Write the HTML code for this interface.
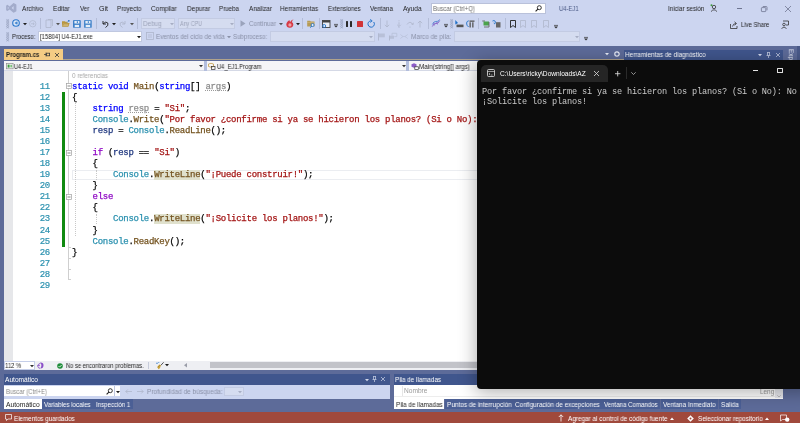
<!DOCTYPE html>
<html><head><meta charset="utf-8">
<style>
*{margin:0;padding:0;box-sizing:border-box}
html,body{width:800px;height:423px;overflow:hidden;background:#CCD5F0;font-family:"Liberation Sans",sans-serif;position:relative}
.a{position:absolute}
.t{position:absolute;white-space:pre;line-height:1;transform-origin:0 0;will-change:transform}
svg.i{position:absolute;overflow:visible}

.code{position:absolute;left:72.4px;font-family:"Liberation Mono",monospace;font-size:9px;letter-spacing:-0.27px;line-height:11.07px;white-space:pre;color:#000;will-change:transform;-webkit-text-stroke:0.25px currentColor}
.ln{position:absolute;left:20px;width:30px;text-align:right;font-family:"Liberation Mono",monospace;font-size:9px;letter-spacing:-0.27px;line-height:11.07px;color:#2B91AF;will-change:transform;-webkit-text-stroke:0.2px currentColor}
.kw{color:#0000FF}.ctl{color:#8F08C4}.ty{color:#2B91AF}.m{color:#74531F}.s{color:#A31515}.v{color:#1F377F}.un{color:#8C8C8C;text-decoration:underline dotted #9A9A9A}
.hl{background:#E0E1CD}

.term{position:absolute;left:481.5px;font-family:"Liberation Mono",monospace;font-size:8.58px;letter-spacing:-0.15px;line-height:10px;white-space:pre;color:#CCCCCC;will-change:transform}

</style></head><body>
<div class="a" style="left:0px;top:0px;width:800px;height:45px;background:#CCD5F0;"></div>
<svg class="i" style="left:6px;top:3.4px" width="10.5" height="9.8" viewBox="0 0 10.5 9.8"><path d="M7.2 0.2 Q7.6 0 8.1 0.2 L10 1.2 Q10.4 1.5 10.4 2 V7.8 Q10.4 8.3 10 8.6 L8.1 9.6 Q7.6 9.8 7.2 9.6 L3.6 6.4 L1.8 7.8 Q1.3 8.1 0.9 7.8 L0.4 7.4 Q0.1 7.2 0.1 6.8 V3 Q0.1 2.6 0.4 2.4 L0.9 2 Q1.3 1.7 1.8 2 L3.6 3.4 Z M7.6 3.1 L5.6 4.9 L7.6 6.7 Z M1.8 3.7 V6.1 L3 4.9 Z" fill="#A3ACCB" fill-rule="evenodd"/></svg>
<div class="t" style="left:22.17px;top:6.18px;font-size:6.6px;color:#1E1E1E;font-weight:normal;transform:scaleX(0.9618);font-family:"Liberation Sans",sans-serif;">Archivo</div>
<div class="t" style="left:53.17px;top:6.18px;font-size:6.6px;color:#1E1E1E;font-weight:normal;transform:scaleX(0.9725);font-family:"Liberation Sans",sans-serif;">Editar</div>
<div class="t" style="left:79.67px;top:6.18px;font-size:6.6px;color:#1E1E1E;font-weight:normal;transform:scaleX(0.9348);font-family:"Liberation Sans",sans-serif;">Ver</div>
<div class="t" style="left:98.57px;top:6.18px;font-size:6.6px;color:#1E1E1E;font-weight:normal;transform:scaleX(1.0738);font-family:"Liberation Sans",sans-serif;">Git</div>
<div class="t" style="left:117.17px;top:6.18px;font-size:6.6px;color:#1E1E1E;font-weight:normal;transform:scaleX(0.9377);font-family:"Liberation Sans",sans-serif;">Proyecto</div>
<div class="t" style="left:151.42px;top:6.18px;font-size:6.6px;color:#1E1E1E;font-weight:normal;transform:scaleX(0.9723);font-family:"Liberation Sans",sans-serif;">Compilar</div>
<div class="t" style="left:186.67px;top:6.18px;font-size:6.6px;color:#1E1E1E;font-weight:normal;transform:scaleX(0.9720);font-family:"Liberation Sans",sans-serif;">Depurar</div>
<div class="t" style="left:219.17px;top:6.18px;font-size:6.6px;color:#1E1E1E;font-weight:normal;transform:scaleX(0.9363);font-family:"Liberation Sans",sans-serif;">Prueba</div>
<div class="t" style="left:248.67px;top:6.18px;font-size:6.6px;color:#1E1E1E;font-weight:normal;transform:scaleX(0.9615);font-family:"Liberation Sans",sans-serif;">Analizar</div>
<div class="t" style="left:280.42px;top:6.18px;font-size:6.6px;color:#1E1E1E;font-weight:normal;transform:scaleX(0.9642);font-family:"Liberation Sans",sans-serif;">Herramientas</div>
<div class="t" style="left:328.42px;top:6.18px;font-size:6.6px;color:#1E1E1E;font-weight:normal;transform:scaleX(0.9092);font-family:"Liberation Sans",sans-serif;">Extensiones</div>
<div class="t" style="left:370.42px;top:6.18px;font-size:6.6px;color:#1E1E1E;font-weight:normal;transform:scaleX(0.9466);font-family:"Liberation Sans",sans-serif;">Ventana</div>
<div class="t" style="left:402.92px;top:6.18px;font-size:6.6px;color:#1E1E1E;font-weight:normal;transform:scaleX(0.9775);font-family:"Liberation Sans",sans-serif;">Ayuda</div>
<div class="a" style="left:430.5px;top:2.5px;width:115px;height:11.5px;background:#FFFFFF;border:1px solid #B9C1DA"></div>
<div class="t" style="left:433.43px;top:5.98px;font-size:6.4px;color:#6D6D6D;font-weight:normal;transform:scaleX(0.9397);font-family:"Liberation Sans",sans-serif;">Buscar (Ctrl+Q)</div>
<svg class="i" style="left:535px;top:4.5px" width="7" height="7" viewBox="0 0 7 7"><circle cx="4.3" cy="2.7" r="2" fill="none" stroke="#1E1E1E" stroke-width="0.9"/><path d="M2.9 4.1 L0.6 6.4" stroke="#1E1E1E" stroke-width="1.1"/></svg>
<div class="t" style="left:558.92px;top:6.18px;font-size:6.6px;color:#4B5A86;font-weight:normal;transform:scaleX(0.8936);font-family:"Liberation Sans",sans-serif;">U4-EJ1</div>
<div class="t" style="left:668.47px;top:6.18px;font-size:6.6px;color:#1E1E1E;font-weight:normal;transform:scaleX(0.9422);font-family:"Liberation Sans",sans-serif;">Iniciar sesión</div>
<svg class="i" style="left:709.5px;top:4px" width="8" height="8" viewBox="0 0 8 8"><circle cx="4" cy="3" r="1.7" fill="none" stroke="#333" stroke-width="0.8"/><path d="M1 7.6 Q4 4 7 7.6" fill="none" stroke="#333" stroke-width="0.8"/><circle cx="1.5" cy="1.2" r="1" fill="#3C9A3C"/></svg>
<div class="a" style="left:736.7px;top:8px;width:5.6px;height:0.8px;background:#6E7591;"></div>
<svg class="i" style="left:760.5px;top:6px" width="6.5" height="6" viewBox="0 0 6.5 6"><rect x="0.4" y="1.6" width="4.4" height="4" rx="0.6" fill="none" stroke="#6E7591" stroke-width="0.8"/><path d="M1.8 0.5 H5.2 Q6 0.5 6 1.3 V4.3" fill="none" stroke="#6E7591" stroke-width="0.8"/></svg>
<svg class="i" style="left:785px;top:6px" width="6" height="6" viewBox="0 0 6 6"><path d="M0 0 L6 6 M6 0 L0 6" stroke="#6E7591" stroke-width="0.8"/></svg>
<svg class="i" style="left:5.5px;top:18.5px" width="3.4" height="10" viewBox="0 0 3.4 10"><path d="M0.3 0.3 L3.1 2.1 L0.3 3.9 L3.1 5.7 L0.3 7.5 L3.1 9.3 M3.1 0.3 L0.3 2.1 L3.1 3.9 L0.3 5.7 L3.1 7.5 L0.3 9.3" fill="none" stroke="#939DBB" stroke-width="0.6"/></svg>
<svg class="i" style="left:11.8px;top:19.3px" width="8" height="8" viewBox="0 0 8 8"><circle cx="4" cy="4" r="3.3" fill="#D9E5F6" stroke="#2C78CC" stroke-width="1.1"/><path d="M4.8 2.4 L2.6 4 L4.8 5.6 Z" fill="#2C78CC"/><path d="M5.3 2.6 V5.4" stroke="#2C78CC" stroke-width="0.6"/></svg>
<svg class="i" style="left:22.5px;top:22.8px" width="4" height="3" viewBox="0 0 4 3"><path d="M0 0 H4 L2 2.2 Z" fill="#1E1E1E"/></svg>
<svg class="i" style="left:28.8px;top:19.6px" width="7.5" height="7.5" viewBox="0 0 7.5 7.5"><circle cx="3.75" cy="3.75" r="3.2" fill="none" stroke="#AEB6CC" stroke-width="0.7"/><path d="M2 3.75 H5.2 M3.9 2.5 L5.2 3.75 L3.9 5" fill="none" stroke="#AEB6CC" stroke-width="0.7"/></svg>
<div class="a" style="left:40px;top:18px;width:1px;height:11px;background:#B4BDD8;"></div>
<svg class="i" style="left:45px;top:19px" width="8" height="9" viewBox="0 0 8 9"><path d="M1 1 H6 V8.5 H1 Z M3 0.5 H7.5 V7" fill="none" stroke="#AEB6CC" stroke-width="0.8"/></svg>
<svg class="i" style="left:55.5px;top:22.8px" width="4" height="3" viewBox="0 0 4 3"><path d="M0 0 H4 L2 2.2 Z" fill="#555"/></svg>
<svg class="i" style="left:62px;top:20px" width="8" height="7" viewBox="0 0 8 7"><path d="M0 1.2 H2.8 L3.4 1.8 H5.6 V3 H1.4 L0 6.8 Z" fill="#B8963E"/><path d="M1.4 3 H7.6 L6.4 6.8 H0 Z" fill="#B8963E"/><path d="M1.5 4.3 H6.3 M1.2 5.5 H6" stroke="#E2D2A8" stroke-width="0.5"/><circle cx="6.8" cy="0.8" r="0.9" fill="#1E70C8"/><path d="M4.6 2.6 L6.2 1.4" stroke="#5B95D5" stroke-width="0.6"/></svg>
<svg class="i" style="left:73.2px;top:20px" width="8" height="8" viewBox="0 0 8 8"><rect x="0" y="0" width="7.8" height="7.8" rx="0.9" fill="#3D7FC8"/><rect x="1.4" y="0.9" width="5" height="2.6" fill="#E6EEF8"/><rect x="3.8" y="1.2" width="1.1" height="1.8" fill="#3D7FC8"/><rect x="1.7" y="4.9" width="4.4" height="2.2" fill="#E6EEF8"/></svg>
<svg class="i" style="left:84.2px;top:20px" width="8" height="8" viewBox="0 0 8 8"><rect x="0" y="0" width="7.8" height="7.8" rx="0.9" fill="#4A88CC"/><rect x="1.4" y="0.9" width="5" height="2.6" fill="#E6EEF8"/><rect x="3.8" y="1.2" width="1.1" height="1.8" fill="#4A88CC"/><rect x="1.7" y="4.9" width="4.4" height="2.2" fill="#E6EEF8"/></svg>
<div class="a" style="left:96px;top:18px;width:1px;height:11px;background:#B4BDD8;"></div>
<svg class="i" style="left:101px;top:19.5px" width="8" height="8" viewBox="0 0 8 8"><path d="M2 1 V4 H5" fill="none" stroke="#1E1E1E" stroke-width="0.9"/><path d="M2.2 3.8 Q5 0.8 6.8 3 Q8 5.5 4.5 7.5" fill="none" stroke="#1E1E1E" stroke-width="0.9"/></svg>
<svg class="i" style="left:112px;top:22.8px" width="4" height="3" viewBox="0 0 4 3"><path d="M0 0 H4 L2 2.2 Z" fill="#1E1E1E"/></svg>
<svg class="i" style="left:118.5px;top:19.5px" width="8" height="8" viewBox="0 0 8 8"><path d="M6 1 V4 H3" fill="none" stroke="#AEB6CC" stroke-width="0.9"/><path d="M5.8 3.8 Q3 0.8 1.2 3 Q0 5.5 3.5 7.5" fill="none" stroke="#AEB6CC" stroke-width="0.9"/></svg>
<svg class="i" style="left:130px;top:22.8px" width="4" height="3" viewBox="0 0 4 3"><path d="M0 0 H4 L2 2.2 Z" fill="#555"/></svg>
<div class="a" style="left:137px;top:18px;width:1px;height:11px;background:#B4BDD8;"></div>
<div class="a" style="left:140.5px;top:18px;width:34px;height:10.8px;background:#D5DCF0;border:1px solid #C3CBE3"></div>
<div class="t" style="left:142.67px;top:21.08px;font-size:6.6px;color:#9DA4BA;font-weight:normal;transform:scaleX(0.9600);font-family:"Liberation Sans",sans-serif;">Debug</div>
<svg class="i" style="left:169.5px;top:22.8px" width="4" height="3" viewBox="0 0 4 3"><path d="M0 0 H4 L2 2.2 Z" fill="#A7AEC4"/></svg>
<div class="a" style="left:178px;top:18px;width:57px;height:10.8px;background:#D5DCF0;border:1px solid #C3CBE3"></div>
<div class="t" style="left:180.17px;top:21.08px;font-size:6.6px;color:#9DA4BA;font-weight:normal;transform:scaleX(0.8170);font-family:"Liberation Sans",sans-serif;">Any CPU</div>
<svg class="i" style="left:229.5px;top:22.8px" width="4" height="3" viewBox="0 0 4 3"><path d="M0 0 H4 L2 2.2 Z" fill="#A7AEC4"/></svg>
<svg class="i" style="left:240px;top:20px" width="6" height="7" viewBox="0 0 6 7"><path d="M0.5 0.3 L5.5 3.5 L0.5 6.7 Z" fill="#9AA3BC"/></svg>
<div class="t" style="left:249.17px;top:21.08px;font-size:6.6px;color:#8A91A8;font-weight:normal;transform:scaleX(0.9411);font-family:"Liberation Sans",sans-serif;">Continuar</div>
<svg class="i" style="left:278.5px;top:22.8px" width="4" height="3" viewBox="0 0 4 3"><path d="M0 0 H4 L2 2.2 Z" fill="#555"/></svg>
<svg class="i" style="left:286px;top:19px" width="8" height="9" viewBox="0 0 8 9"><path d="M7.6 0.2 Q4.5 1.2 4.2 3 Q3.2 1.8 3.6 0.9 Q0.2 3 0.3 5.6 Q0.6 8.8 3.8 8.8 Q7.4 8.6 7.3 5.2 Q7.2 3.6 6 3.2 Q5.8 1.6 7.6 0.2 Z" fill="#D63A45"/><ellipse cx="3.9" cy="5.9" rx="1.6" ry="1.7" fill="#F0A0A6"/></svg>
<svg class="i" style="left:296px;top:22.8px" width="4" height="3" viewBox="0 0 4 3"><path d="M0 0 H4 L2 2.2 Z" fill="#1E1E1E"/></svg>
<div class="a" style="left:302px;top:18px;width:1px;height:11px;background:#B4BDD8;"></div>
<svg class="i" style="left:306.5px;top:20px" width="8.5" height="8" viewBox="0 0 8.5 8"><path d="M0.2 0.8 H3 L3.8 1.6 H7.5 V6.5 H0.2 Z" fill="#B59A55"/><path d="M0.2 2.4 H7.5" stroke="#D9C593" stroke-width="0.5"/><circle cx="5.6" cy="5" r="1.5" fill="#E6EEF8" stroke="#1E70C8" stroke-width="0.8"/><path d="M4.6 6 L3.4 7.6" stroke="#1E70C8" stroke-width="1"/></svg>
<div class="a" style="left:318.5px;top:18px;width:1px;height:11px;background:#B4BDD8;"></div>
<svg class="i" style="left:321.6px;top:19.8px" width="8.5" height="8" viewBox="0 0 8.5 8"><rect x="0.5" y="0.5" width="7.5" height="7" fill="#E9EDF7" stroke="#424242" stroke-width="0.9"/><rect x="0.5" y="0.5" width="7.5" height="2" fill="#424242"/><circle cx="2.2" cy="6" r="1.5" fill="none" stroke="#1E70C8" stroke-width="0.9"/></svg>
<svg class="i" style="left:333.8px;top:23.5px" width="4" height="4" viewBox="0 0 4 4"><path d="M0 0.4 H4" stroke="#333" stroke-width="0.7"/><path d="M0 1.5 H4 L2 3.6 Z" fill="#333"/></svg>
<svg class="i" style="left:340.0px;top:18.5px" width="3.4" height="10" viewBox="0 0 3.4 10"><path d="M0.3 0.3 L3.1 2.1 L0.3 3.9 L3.1 5.7 L0.3 7.5 L3.1 9.3 M3.1 0.3 L0.3 2.1 L3.1 3.9 L0.3 5.7 L3.1 7.5 L0.3 9.3" fill="none" stroke="#939DBB" stroke-width="0.6"/></svg>
<div class="a" style="left:345.9px;top:20.7px;width:2.4px;height:6px;background:#2A2A2A;border-radius:0.5px"></div>
<div class="a" style="left:349.5px;top:20.7px;width:2.4px;height:6px;background:#2A2A2A;border-radius:0.5px"></div>
<div class="a" style="left:356.8px;top:21.2px;width:6.2px;height:5.5px;background:#D13438;border-radius:0.6px"></div>
<svg class="i" style="left:367px;top:19.5px" width="8" height="8" viewBox="0 0 8 8"><path d="M6.7 2 A3.2 3.2 0 1 1 3.8 0.8" fill="none" stroke="#1E70C8" stroke-width="1"/><path d="M3.2 -0.6 L5.2 0.9 L3.2 2.4" fill="none" stroke="#1E70C8" stroke-width="0.9"/></svg>
<div class="a" style="left:379.5px;top:18px;width:1px;height:11px;background:#B4BDD8;"></div>
<svg class="i" style="left:384px;top:19.5px" width="6" height="8" viewBox="0 0 6 8"><path d="M3 0.5 V7 M0.8 4.8 L3 7 L5.2 4.8" fill="none" stroke="#AEB6CC" stroke-width="0.8"/></svg>
<svg class="i" style="left:395.5px;top:19.5px" width="6" height="8" viewBox="0 0 6 8"><path d="M3 0.3 V1.3 M3 2.3 V6.5 M1.2 4.8 L3 6.6 L4.8 4.8" fill="none" stroke="#AEB6CC" stroke-width="0.8"/><circle cx="3" cy="7.4" r="0.5" fill="#AEB6CC"/></svg>
<svg class="i" style="left:405.5px;top:19.5px" width="8" height="8" viewBox="0 0 8 8"><path d="M1 4.5 Q4 0 7 4.5 M5.2 3.8 L7 4.6 L7.4 2.7" fill="none" stroke="#AEB6CC" stroke-width="0.8"/><circle cx="4" cy="7" r="0.6" fill="#AEB6CC"/></svg>
<svg class="i" style="left:417px;top:19.5px" width="6" height="8" viewBox="0 0 6 8"><path d="M3 7.5 V1 M0.8 3.2 L3 1 L5.2 3.2" fill="none" stroke="#AEB6CC" stroke-width="0.8"/></svg>
<div class="a" style="left:428px;top:18px;width:1px;height:11px;background:#B4BDD8;"></div>
<svg class="i" style="left:431.5px;top:20px" width="8" height="7" viewBox="0 0 8 7"><path d="M0.3 6.5 Q2 3 4 3.5 Q6 4 7.7 0.5" fill="none" stroke="#7E57C2" stroke-width="0.9"/><path d="M0.3 4.5 Q2 1 4 1.5 Q6 2 7.7 -0.5" fill="none" stroke="#3C7FD0" stroke-width="0.8"/><path d="M1.5 2.5 L2.5 5.5 M4.5 1.8 L5.5 4.5" stroke="#7E57C2" stroke-width="0.6"/></svg>
<svg class="i" style="left:444px;top:23.5px" width="4" height="4" viewBox="0 0 4 4"><path d="M0 0.4 H4" stroke="#333" stroke-width="0.7"/><path d="M0 1.5 H4 L2 3.6 Z" fill="#333"/></svg>
<svg class="i" style="left:450.0px;top:18.5px" width="3.4" height="10" viewBox="0 0 3.4 10"><path d="M0.3 0.3 L3.1 2.1 L0.3 3.9 L3.1 5.7 L0.3 7.5 L3.1 9.3 M3.1 0.3 L0.3 2.1 L3.1 3.9 L0.3 5.7 L3.1 7.5 L0.3 9.3" fill="none" stroke="#939DBB" stroke-width="0.6"/></svg>
<svg class="i" style="left:455px;top:19.8px" width="9" height="8" viewBox="0 0 9 8"><path d="M0.3 0 L0.3 4.5 L3 3 Z" fill="#1E70C8"/><rect x="1.5" y="4.6" width="7" height="2.6" fill="#555"/></svg>
<svg class="i" style="left:466px;top:20px" width="9" height="8" viewBox="0 0 9 8"><path d="M2.6 7 Q0.4 5.5 0.6 3 Q0.8 1 2.8 0.8" fill="none" stroke="#1E70C8" stroke-width="0.9"/><rect x="3.5" y="0.5" width="5" height="1.3" fill="#555"/><rect x="3.5" y="2.3" width="1.3" height="5.2" fill="#555"/><rect x="6.2" y="2.3" width="1.3" height="5.2" fill="#555"/></svg>
<div class="a" style="left:478px;top:18px;width:1px;height:11px;background:#B4BDD8;"></div>
<svg class="i" style="left:482px;top:20px" width="8" height="8" viewBox="0 0 8 8"><path d="M0.3 1 H3" stroke="#555" stroke-width="0.8"/><rect x="1.5" y="1.5" width="5.5" height="4" fill="#4CA34C"/><path d="M7 2 V7 H2" fill="none" stroke="#666" stroke-width="0.9"/></svg>
<svg class="i" style="left:492px;top:20px" width="9" height="8" viewBox="0 0 9 8"><path d="M0.5 1 Q2 0 3.2 1.2 Q3.8 2.4 2.6 3.6" fill="none" stroke="#1E70C8" stroke-width="0.9"/><path d="M1.8 2.8 L2.6 3.8 L3.6 3" fill="none" stroke="#1E70C8" stroke-width="0.7"/><rect x="4" y="2.2" width="4.5" height="5.3" fill="#666"/></svg>
<div class="a" style="left:504.5px;top:18px;width:1px;height:11px;background:#B4BDD8;"></div>
<svg class="i" style="left:509.5px;top:19.5px" width="6" height="8" viewBox="0 0 6 8"><path d="M0.5 0.5 H5.5 V7.5 L3 5.5 L0.5 7.5 Z" fill="none" stroke="#1E1E1E" stroke-width="0.9"/></svg>
<svg class="i" style="left:520px;top:19.5px" width="7" height="8" viewBox="0 0 7 8"><path d="M0.5 0.5 H5.5 V7.5 L3 5.5 L0.5 7.5 Z" fill="none" stroke="#AEB6CC" stroke-width="0.8"/></svg>
<svg class="i" style="left:531px;top:19.5px" width="7" height="8" viewBox="0 0 7 8"><path d="M0.5 0.5 H5.5 V7.5 L3 5.5 L0.5 7.5 Z" fill="none" stroke="#AEB6CC" stroke-width="0.8"/></svg>
<svg class="i" style="left:542.5px;top:19.5px" width="7" height="8" viewBox="0 0 7 8"><path d="M0.5 0.5 H5.5 V7.5 L3 5.5 L0.5 7.5 Z" fill="none" stroke="#AEB6CC" stroke-width="0.8"/></svg>
<svg class="i" style="left:553.5px;top:24.5px" width="4" height="4" viewBox="0 0 4 4"><path d="M0 0.4 H4" stroke="#333" stroke-width="0.7"/><path d="M0 1.5 H4 L2 3.6 Z" fill="#333"/></svg>
<svg class="i" style="left:730px;top:20.5px" width="8" height="8" viewBox="0 0 8 8"><path d="M0.5 3 V7.5 H7 V5" fill="none" stroke="#333" stroke-width="0.8"/><path d="M2.5 5.5 Q3 2.5 6 2.5 M4.5 0.8 L6.5 2.5 L4.5 4.2" fill="none" stroke="#333" stroke-width="0.8"/></svg>
<div class="t" style="left:740.67px;top:21.98px;font-size:6.6px;color:#1E1E1E;font-weight:normal;transform:scaleX(0.8963);font-family:"Liberation Sans",sans-serif;">Live Share</div>
<svg class="i" style="left:781px;top:20px" width="8" height="9" viewBox="0 0 8 9"><path d="M2 1 H7.5 V5 H5" fill="none" stroke="#333" stroke-width="0.8"/><circle cx="3" cy="4.5" r="1.3" fill="none" stroke="#333" stroke-width="0.8"/><path d="M0.5 8.5 Q3 5.5 5.5 8.5" fill="none" stroke="#333" stroke-width="0.8"/></svg>
<svg class="i" style="left:5.5px;top:31.5px" width="3.4" height="10" viewBox="0 0 3.4 10"><path d="M0.3 0.3 L3.1 2.1 L0.3 3.9 L3.1 5.7 L0.3 7.5 L3.1 9.3 M3.1 0.3 L0.3 2.1 L3.1 3.9 L0.3 5.7 L3.1 7.5 L0.3 9.3" fill="none" stroke="#939DBB" stroke-width="0.6"/></svg>
<div class="t" style="left:11.67px;top:34.18px;font-size:6.6px;color:#1E1E1E;font-weight:normal;transform:scaleX(0.8935);font-family:"Liberation Sans",sans-serif;">Proceso:</div>
<div class="a" style="left:38.4px;top:31px;width:103.2px;height:10.6px;background:#FFFFFF;border:1px solid #C0C8E0"></div>
<div class="t" style="left:39.67px;top:33.98px;font-size:6.6px;color:#1E1E1E;font-weight:normal;transform:scaleX(0.9033);font-family:"Liberation Sans",sans-serif;">[15804] U4-EJ1.exe</div>
<svg class="i" style="left:136.5px;top:36px" width="4" height="3" viewBox="0 0 4 3"><path d="M0 0 H4 L2 2.2 Z" fill="#1E1E1E"/></svg>
<svg class="i" style="left:146px;top:32px" width="8" height="8" viewBox="0 0 8 8"><rect x="0.5" y="0.5" width="7" height="7" fill="none" stroke="#AEB6CC" stroke-width="0.8"/><path d="M2 3 H6 M2 5 H6" stroke="#AEB6CC" stroke-width="0.7"/></svg>
<div class="t" style="left:155.92px;top:34.18px;font-size:6.6px;color:#8A91A8;font-weight:normal;transform:scaleX(0.9460);font-family:"Liberation Sans",sans-serif;">Eventos del ciclo de vida</div>
<svg class="i" style="left:226.5px;top:36px" width="4" height="3" viewBox="0 0 4 3"><path d="M0 0 H4 L2 2.2 Z" fill="#8A91A8"/></svg>
<div class="t" style="left:232.92px;top:34.18px;font-size:6.6px;color:#8A91A8;font-weight:normal;transform:scaleX(0.9225);font-family:"Liberation Sans",sans-serif;">Subproceso:</div>
<div class="a" style="left:270px;top:31px;width:104.5px;height:10.6px;background:#D5DCF0;border:1px solid #C3CBE3"></div>
<svg class="i" style="left:369px;top:36px" width="4" height="3" viewBox="0 0 4 3"><path d="M0 0 H4 L2 2.2 Z" fill="#A7AEC4"/></svg>
<svg class="i" style="left:378px;top:33px" width="7" height="7.5" viewBox="0 0 7 7.5"><path d="M0.5 7.5 V0.3" stroke="#AEB6CC" stroke-width="0.9"/><path d="M1 0.5 H6.8 V4.3 H1 Z" fill="#B8C0D8"/></svg>
<svg class="i" style="left:388.5px;top:33px" width="8" height="7.5" viewBox="0 0 8 7.5"><path d="M0.5 7.5 V2.5" stroke="#AEB6CC" stroke-width="0.9"/><path d="M1 2.7 H5 V5.8 H1 Z" fill="#B8C0D8"/><path d="M3 2.6 V0.3 H7.8 V3.6 H5.3" fill="none" stroke="#B8C0D8" stroke-width="0.8"/></svg>
<svg class="i" style="left:400.3px;top:34px" width="8" height="5" viewBox="0 0 8 5"><path d="M0.3 0.5 L3 2.5 L0.3 4.5 M7.7 0.5 L5 2.5 L7.7 4.5 M3 2.5 H5" fill="none" stroke="#B8C0D8" stroke-width="0.7"/></svg>
<div class="t" style="left:411.42px;top:34.18px;font-size:6.6px;color:#8A91A8;font-weight:normal;transform:scaleX(0.9695);font-family:"Liberation Sans",sans-serif;">Marco de pila:</div>
<div class="a" style="left:453.75px;top:31px;width:126px;height:10.6px;background:#D5DCF0;border:1px solid #C3CBE3"></div>
<svg class="i" style="left:574.5px;top:36px" width="4" height="3" viewBox="0 0 4 3"><path d="M0 0 H4 L2 2.2 Z" fill="#A7AEC4"/></svg>
<svg class="i" style="left:583.5px;top:37px" width="4" height="4" viewBox="0 0 4 4"><path d="M0 0.4 H4" stroke="#333" stroke-width="0.7"/><path d="M0 1.5 H4 L2 3.6 Z" fill="#333"/></svg>
<div class="a" style="left:0px;top:45.5px;width:800px;height:367px;background:#5D6B99;"></div>
<div class="a" style="left:4px;top:48.75px;width:58.5px;height:11px;background:#F5CC84;"></div>
<div class="t" style="left:5.67px;top:52.33px;font-size:6.6px;color:#1E1E1E;font-weight:bold;transform:scaleX(0.9205);font-family:"Liberation Sans",sans-serif;">Program.cs</div>
<svg class="i" style="left:44.3px;top:52.2px" width="6" height="5" viewBox="0 0 6 5"><path d="M0 2.5 H2 M2 0.6 V4.4" fill="none" stroke="#3A3A3A" stroke-width="0.8"/><rect x="2.6" y="1.2" width="3" height="2.6" fill="none" stroke="#3A3A3A" stroke-width="0.8"/></svg>
<svg class="i" style="left:55px;top:52.5px" width="4" height="4" viewBox="0 0 4 4"><path d="M0 0 L4 4 M4 0 L0 4" stroke="#333" stroke-width="0.8"/></svg>
<div class="a" style="left:62.5px;top:58.6px;width:561.5px;height:1.3px;background:#B0A38C;"></div>
<svg class="i" style="left:605px;top:53px" width="4" height="3" viewBox="0 0 4 3"><path d="M0 0 H4 L2 2.2 Z" fill="#E8ECF7"/></svg>
<svg class="i" style="left:613.5px;top:51px" width="6" height="6" viewBox="0 0 6 6"><circle cx="3" cy="3" r="2.2" fill="none" stroke="#E8ECF7" stroke-width="1.2"/></svg>
<div class="a" style="left:623.75px;top:49.5px;width:159px;height:10.8px;background:#40568D;"></div>
<div class="t" style="left:625.42px;top:52.38px;font-size:6.6px;color:#FFFFFF;font-weight:normal;transform:scaleX(0.9610);font-family:"Liberation Sans",sans-serif;">Herramientas de diagnóstico</div>
<svg class="i" style="left:757.5px;top:54px" width="4" height="3" viewBox="0 0 4 3"><path d="M0 0 H4 L2 2.2 Z" fill="#D0D6EA"/></svg>
<svg class="i" style="left:766px;top:51.5px" width="5" height="6" viewBox="0 0 5 6"><path d="M1 0.5 H4 M1.5 0.5 V3.5 M3.5 0.5 V3.5 M0.5 3.5 H4.5 M2.5 3.5 V6" fill="none" stroke="#D0D6EA" stroke-width="0.7"/></svg>
<svg class="i" style="left:775.5px;top:52.5px" width="4" height="4" viewBox="0 0 4 4"><path d="M0 0 L4 4 M4 0 L0 4" stroke="#D0D6EA" stroke-width="0.7"/></svg>
<div class="a" style="left:796.5px;top:46px;width:4px;height:15px;background:#4A5A8A;"></div>
<div class="t" style="left:787px;top:49px;font-size:6.4px;color:#E8ECF7;transform-origin:0 0;transform:translate(6.8px,0) rotate(90deg);width:12px;overflow:hidden">Explo</div>
<div class="a" style="left:4px;top:60.7px;width:474px;height:10.6px;background:#F5F5F7;border-bottom:1px solid #D5D9E6"></div>
<svg class="i" style="left:6px;top:62.5px" width="7.5" height="6.2" viewBox="0 0 7.5 6.2"><rect x="0.4" y="0.4" width="6.7" height="5.4" fill="#F4F4F4" stroke="#8C8C8C" stroke-width="0.7"/><rect x="1.6" y="1.6" width="2" height="3" fill="#3C9A3C"/><rect x="4.3" y="1.8" width="1.8" height="2.6" fill="#7CC27C"/></svg>
<div class="t" style="left:14.43px;top:63.88px;font-size:6.4px;color:#1E1E1E;font-weight:normal;transform:scaleX(0.8746);font-family:"Liberation Sans",sans-serif;">U4-EJ1</div>
<div class="a" style="left:203.8px;top:60.8px;width:3px;height:10px;background:#B3BEDD;"></div>
<svg class="i" style="left:199px;top:65px" width="4" height="3" viewBox="0 0 4 3"><path d="M0 0 H4 L2 2.2 Z" fill="#333"/></svg>
<svg class="i" style="left:208px;top:62.5px" width="8" height="7" viewBox="0 0 8 7"><path d="M0.5 1 L3 0.3 L5.5 1 V3.5 L3 4.2 L0.5 3.5 Z" fill="none" stroke="#C29A45" stroke-width="0.8"/><rect x="3.5" y="3.5" width="3.5" height="3" fill="none" stroke="#333" stroke-width="0.7"/></svg>
<div class="t" style="left:216.58px;top:63.88px;font-size:6.4px;color:#1E1E1E;font-weight:normal;transform:scaleX(0.9043);font-family:"Liberation Sans",sans-serif;">U4_EJ1.Program</div>
<svg class="i" style="left:401.5px;top:65px" width="4" height="3" viewBox="0 0 4 3"><path d="M0 0 H4 L2 2.2 Z" fill="#333"/></svg>
<div class="a" style="left:406.3px;top:60.8px;width:2.6px;height:10px;background:#B3BEDD;"></div>
<svg class="i" style="left:410.5px;top:62.5px" width="8" height="7" viewBox="0 0 8 7"><path d="M0.5 1.2 L3 0.2 L5.5 1.2 V3.8 L3 4.8 L0.5 3.8 Z" fill="#8C5BC7"/><rect x="3.8" y="3.8" width="3.5" height="2.8" fill="#fff" stroke="#333" stroke-width="0.7"/></svg>
<div class="t" style="left:419.48px;top:63.98px;font-size:6.4px;color:#1E1E1E;font-weight:normal;transform:scaleX(0.9872);font-family:"Liberation Sans",sans-serif;">Main(string[] args)</div>
<div class="a" style="left:4px;top:71.3px;width:474px;height:290px;background:#FFFFFF;"></div>
<div class="a" style="left:4px;top:71.3px;width:9px;height:290px;background:#E6E7EA;"></div>
<div class="a" style="left:72.4px;top:169.8px;width:406px;height:10.4px;background:transparent;border:1px solid #EBEDF1;border-right:none"></div>
<div class="t" style="left:72.38px;top:73.23px;font-size:6.5px;color:#A8A8A8;font-weight:normal;transform:scaleX(0.9567);font-family:"Liberation Sans",sans-serif;">0 referencias</div>
<div class="ln" style="top:81.60px">11</div>
<div class="ln" style="top:92.67px">12</div>
<div class="ln" style="top:103.74px">13</div>
<div class="ln" style="top:114.81px">14</div>
<div class="ln" style="top:125.88px">15</div>
<div class="ln" style="top:136.95px">16</div>
<div class="ln" style="top:148.02px">17</div>
<div class="ln" style="top:159.09px">18</div>
<div class="ln" style="top:170.16px">19</div>
<div class="ln" style="top:181.23px">20</div>
<div class="ln" style="top:192.30px">21</div>
<div class="ln" style="top:203.37px">22</div>
<div class="ln" style="top:214.44px">23</div>
<div class="ln" style="top:225.51px">24</div>
<div class="ln" style="top:236.58px">25</div>
<div class="ln" style="top:247.65px">26</div>
<div class="ln" style="top:258.72px">27</div>
<div class="ln" style="top:269.79px">28</div>
<div class="ln" style="top:280.86px">29</div>
<div class="a" style="left:62px;top:92px;width:3px;height:154.5px;background:#108A10;"></div>
<div class="a" style="left:68.3px;top:71.3px;width:0.8px;height:208.5px;background:#CFCFCF;"></div>
<div class="a" style="left:68.3px;top:246.5px;width:2.5px;height:0.7px;background:#CFCFCF;"></div>
<div class="a" style="left:68.3px;top:258px;width:2.5px;height:0.7px;background:#CFCFCF;"></div>
<div class="a" style="left:68.3px;top:269px;width:2.5px;height:0.7px;background:#CFCFCF;"></div>
<div class="a" style="left:68.3px;top:279.3px;width:2.5px;height:0.7px;background:#CFCFCF;"></div>
<svg class="i" style="left:65.8px;top:83px" width="6" height="6" viewBox="0 0 6 6"><rect x="0.4" y="0.4" width="5.2" height="5.2" fill="#fff" stroke="#A0A0A0" stroke-width="0.7"/><path d="M1.5 3 H4.5" stroke="#555" stroke-width="0.7"/></svg>
<svg class="i" style="left:65.8px;top:149.5px" width="6" height="6" viewBox="0 0 6 6"><rect x="0.4" y="0.4" width="5.2" height="5.2" fill="#fff" stroke="#A0A0A0" stroke-width="0.7"/><path d="M1.5 3 H4.5" stroke="#555" stroke-width="0.7"/></svg>
<svg class="i" style="left:65.8px;top:193.8px" width="6" height="6" viewBox="0 0 6 6"><rect x="0.4" y="0.4" width="5.2" height="5.2" fill="#fff" stroke="#A0A0A0" stroke-width="0.7"/><path d="M1.5 3 H4.5" stroke="#555" stroke-width="0.7"/></svg>
<div class="a" style="left:75px;top:103px;width:0;height:133px;border-left:0.8px dotted #C8C8C8"></div>
<div class="a" style="left:95.5px;top:170px;width:0;height:10px;border-left:0.8px dotted #C8C8C8"></div>
<div class="a" style="left:95.5px;top:214px;width:0;height:10px;border-left:0.8px dotted #C8C8C8"></div>
<div class="code" style="top:81.60px"><span class="kw">static</span> <span class="kw">void</span> <span class="m">Main</span>(<span class="kw">string</span>[] <span class="un">args</span>)</div>
<div class="code" style="top:92.67px">{</div>
<div class="code" style="top:103.74px">    <span class="kw">string</span> <span class="un">resp</span> = <span class="s">"Si"</span>;</div>
<div class="code" style="top:114.81px">    <span class="ty">Console</span>.<span class="m">Write</span>(<span class="s">"Por favor ¿confirme si ya se hicieron los planos? (Si o No): "</span>);</div>
<div class="code" style="top:125.88px">    <span class="v">resp</span> = <span class="ty">Console</span>.<span class="m">ReadLine</span>();</div>
<div class="code" style="top:136.95px"></div>
<div class="code" style="top:148.02px">    <span class="ctl">if</span> (<span class="v">resp</span> == <span class="s">"Si"</span>)</div>
<div class="code" style="top:159.09px">    {</div>
<div class="code" style="top:170.16px">        <span class="ty">Console</span>.<span class="m hl">WriteLine</span>(<span class="s">"¡Puede construir!"</span>);</div>
<div class="code" style="top:181.23px">    }</div>
<div class="code" style="top:192.30px">    <span class="ctl">else</span></div>
<div class="code" style="top:203.37px">    {</div>
<div class="code" style="top:214.44px">        <span class="ty">Console</span>.<span class="m hl">WriteLine</span>(<span class="s">"¡Solicite los planos!"</span>);</div>
<div class="code" style="top:225.51px">    }</div>
<div class="code" style="top:236.58px">    <span class="ty">Console</span>.<span class="m">ReadKey</span>();</div>
<div class="code" style="top:247.65px">}</div>
<div class="a" style="left:4px;top:361px;width:474px;height:8.5px;background:#EEEFF3;"></div>
<div class="a" style="left:4px;top:361.2px;width:30.6px;height:8.4px;background:#FFFFFF;border:0.8px solid #C5CEE8"></div>
<div class="t" style="left:5.27px;top:363.18px;font-size:6.6px;color:#1E1E1E;font-weight:normal;transform:scaleX(0.8925);font-family:"Liberation Sans",sans-serif;">112 %</div>
<svg class="i" style="left:30px;top:364.5px" width="4" height="3" viewBox="0 0 4 3"><path d="M0 0 H4 L2 2.2 Z" fill="#333"/></svg>
<svg class="i" style="left:36.5px;top:362px" width="7" height="7" viewBox="0 0 7 7"><path d="M3.2 0.6 Q6.6 0.4 6.5 3.4 Q6.4 6.6 3.2 6.4 Q4.4 5.2 4.4 3.5 Q4.4 1.6 3.2 0.6 Z" fill="#8A4FC8"/><path d="M3.6 1.2 Q0.6 2 0.8 4.4 Q1.2 6.2 3 6.3" fill="none" stroke="#8A4FC8" stroke-width="0.9"/><path d="M0.3 3.6 H3" stroke="#8A4FC8" stroke-width="0.8"/></svg>
<svg class="i" style="left:57px;top:362.5px" width="6" height="6" viewBox="0 0 6 6"><circle cx="3" cy="3" r="2.8" fill="#1E8C3A"/><path d="M1.5 3 L2.6 4.1 L4.6 2" fill="none" stroke="#fff" stroke-width="0.8"/></svg>
<div class="t" style="left:65.68px;top:363.08px;font-size:6.4px;color:#1E1E1E;font-weight:normal;transform:scaleX(0.9031);font-family:"Liberation Sans",sans-serif;">No se encontraron problemas.</div>
<div class="a" style="left:148px;top:362px;width:0.8px;height:6.5px;background:#C6CBDA;"></div>
<svg class="i" style="left:155.5px;top:361.5px" width="8" height="7.5" viewBox="0 0 8 7.5"><path d="M7.6 0.3 L4.6 3.6" stroke="#444" stroke-width="0.9"/><path d="M4.9 3.3 L3.3 2.6 L1.2 4.9 L2.6 7.2 Q4.6 6 4.9 3.3 Z" fill="#C9A23A"/><path d="M1.8 5.2 L3.8 3.4" stroke="#8E6E1E" stroke-width="0.5"/><circle cx="1" cy="1.2" r="0.7" fill="#2C78CC"/><circle cx="2.8" cy="0.5" r="0.5" fill="#2C78CC"/></svg>
<svg class="i" style="left:165.3px;top:364.2px" width="4" height="3" viewBox="0 0 4 3"><path d="M0 0 H4 L2 2.2 Z" fill="#1E1E1E"/></svg>
<svg class="i" style="left:184.2px;top:363px" width="3" height="4.6" viewBox="0 0 3 4.6"><path d="M3 0 V4.6 L0 2.3 Z" fill="#9A9DA8"/></svg>
<div class="a" style="left:210px;top:362.3px;width:268px;height:5.6px;background:#C2C3C9;"></div>
<div class="a" style="left:4px;top:374px;width:385.6px;height:11px;background:#40568D;"></div>
<div class="t" style="left:5.27px;top:377.18px;font-size:6.6px;color:#FFFFFF;font-weight:normal;transform:scaleX(1.0018);font-family:"Liberation Sans",sans-serif;">Automático</div>
<svg class="i" style="left:364.5px;top:379px" width="4" height="3" viewBox="0 0 4 3"><path d="M0 0 H4 L2 2.2 Z" fill="#D0D6EA"/></svg>
<svg class="i" style="left:372px;top:376px" width="5" height="6" viewBox="0 0 5 6"><path d="M1 0.5 H4 M1.5 0.5 V3.5 M3.5 0.5 V3.5 M0.5 3.5 H4.5 M2.5 3.5 V6" fill="none" stroke="#D0D6EA" stroke-width="0.7"/></svg>
<svg class="i" style="left:381px;top:377px" width="4" height="4" viewBox="0 0 4 4"><path d="M0 0 L4 4 M4 0 L0 4" stroke="#D0D6EA" stroke-width="0.7"/></svg>
<div class="a" style="left:4px;top:385px;width:385.6px;height:14px;background:#CCD5F0;"></div>
<div class="a" style="left:4px;top:385.6px;width:116px;height:10.7px;background:#FFFFFF;"></div>
<div class="t" style="left:6.28px;top:388.68px;font-size:6.4px;color:#8A8A8A;font-weight:normal;transform:scaleX(0.9357);font-family:"Liberation Sans",sans-serif;">Buscar (Ctrl+E)</div>
<svg class="i" style="left:106px;top:387.5px" width="7" height="7" viewBox="0 0 7 7"><circle cx="4.3" cy="2.7" r="2" fill="none" stroke="#1E1E1E" stroke-width="0.9"/><path d="M2.9 4.1 L0.6 6.4" stroke="#1E1E1E" stroke-width="1.1"/></svg>
<div class="a" style="left:114px;top:385.5px;width:0.8px;height:10.8px;background:#C0C8E0;"></div>
<svg class="i" style="left:115.5px;top:390.5px" width="4" height="3" viewBox="0 0 4 3"><path d="M0 0 H4 L2 2.2 Z" fill="#1E1E1E"/></svg>
<svg class="i" style="left:124.5px;top:388.5px" width="7" height="5" viewBox="0 0 7 5"><path d="M7 2.5 H0.8 M2.8 0.5 L0.8 2.5 L2.8 4.5" fill="none" stroke="#AEB6CC" stroke-width="0.8"/></svg>
<svg class="i" style="left:136.5px;top:388.5px" width="7" height="5" viewBox="0 0 7 5"><path d="M0 2.5 H6.2 M4.2 0.5 L6.2 2.5 L4.2 4.5" fill="none" stroke="#AEB6CC" stroke-width="0.8"/></svg>
<div class="t" style="left:146.67px;top:388.58px;font-size:6.6px;color:#8A91A8;font-weight:normal;transform:scaleX(0.9780);font-family:"Liberation Sans",sans-serif;">Profundidad de búsqueda:</div>
<div class="a" style="left:223.5px;top:386.5px;width:20.5px;height:9px;background:#D5DCF0;border:1px solid #C3CBE3"></div>
<svg class="i" style="left:238px;top:390.5px" width="4" height="3" viewBox="0 0 4 3"><path d="M0 0 H4 L2 2.2 Z" fill="#A7AEC4"/></svg>
<div class="a" style="left:4px;top:398.8px;width:37.5px;height:10.2px;background:#FFFFFF;"></div>
<div class="t" style="left:5.67px;top:401.78px;font-size:6.6px;color:#1E1E1E;font-weight:normal;transform:scaleX(1.0200);font-family:"Liberation Sans",sans-serif;">Automático</div>
<div class="a" style="left:41.5px;top:398.8px;width:52px;height:10.2px;background:#4B5F95;"></div>
<div class="t" style="left:44.27px;top:401.78px;font-size:6.6px;color:#FFFFFF;font-weight:normal;transform:scaleX(0.9433);font-family:"Liberation Sans",sans-serif;">Variables locales</div>
<div class="a" style="left:94.2px;top:398.8px;width:39px;height:10.2px;background:#4B5F95;"></div>
<div class="t" style="left:96.07px;top:401.78px;font-size:6.6px;color:#FFFFFF;font-weight:normal;transform:scaleX(0.9252);font-family:"Liberation Sans",sans-serif;">Inspección 1</div>
<div class="a" style="left:394px;top:374px;width:389px;height:11px;background:#40568D;"></div>
<div class="t" style="left:395.27px;top:377.18px;font-size:6.6px;color:#FFFFFF;font-weight:normal;transform:scaleX(0.9518);font-family:"Liberation Sans",sans-serif;">Pila de llamadas</div>
<div class="a" style="left:394px;top:385px;width:389px;height:14px;background:#FFFFFF;"></div>
<div class="a" style="left:394px;top:395.6px;width:389px;height:0.6px;background:#EDEDED;"></div>
<div class="a" style="left:402.2px;top:385.5px;width:0.7px;height:10px;background:#E6E6E6;"></div>
<div class="t" style="left:404.27px;top:388.08px;font-size:6.6px;color:#9A9A9A;font-weight:normal;transform:scaleX(0.9832);font-family:"Liberation Sans",sans-serif;">Nombre</div>
<div class="t" style="left:760.18px;top:388.68px;font-size:6.4px;color:#9A9A9A;font-weight:normal;transform:scaleX(0.9945);font-family:"Liberation Sans",sans-serif;">Leng</div>
<div class="a" style="left:775px;top:386px;width:8px;height:12px;background:#E8E9EE;"></div>
<svg class="i" style="left:777px;top:395px" width="4" height="2.5" viewBox="0 0 4 2.5"><path d="M0.3 0.3 L2 2 L3.7 0.3" fill="none" stroke="#999" stroke-width="0.6"/></svg>
<div class="a" style="left:394px;top:398.8px;width:50.4px;height:10.2px;background:#FFFFFF;"></div>
<div class="t" style="left:395.67px;top:401.78px;font-size:6.6px;color:#1E1E1E;font-weight:normal;transform:scaleX(0.9642);font-family:"Liberation Sans",sans-serif;">Pila de llamadas</div>
<div class="a" style="left:444.5px;top:398.8px;width:69px;height:10.2px;background:#4B5F95;"></div>
<div class="t" style="left:446.67px;top:401.78px;font-size:6.6px;color:#FFFFFF;font-weight:normal;transform:scaleX(0.9799);font-family:"Liberation Sans",sans-serif;">Puntos de interrupción</div>
<div class="a" style="left:512.5px;top:398.8px;width:89px;height:10.2px;background:#4B5F95;"></div>
<div class="t" style="left:514.67px;top:401.78px;font-size:6.6px;color:#FFFFFF;font-weight:normal;transform:scaleX(0.9583);font-family:"Liberation Sans",sans-serif;">Configuración de excepciones</div>
<div class="a" style="left:601.5px;top:398.8px;width:58px;height:10.2px;background:#4B5F95;"></div>
<div class="t" style="left:603.67px;top:401.78px;font-size:6.6px;color:#FFFFFF;font-weight:normal;transform:scaleX(0.9264);font-family:"Liberation Sans",sans-serif;">Ventana Comandos</div>
<div class="a" style="left:660.5px;top:398.8px;width:57px;height:10.2px;background:#4B5F95;"></div>
<div class="t" style="left:662.67px;top:401.78px;font-size:6.6px;color:#FFFFFF;font-weight:normal;transform:scaleX(0.9575);font-family:"Liberation Sans",sans-serif;">Ventana Inmediato</div>
<div class="a" style="left:718.5px;top:398.8px;width:22px;height:10.2px;background:#4B5F95;"></div>
<div class="t" style="left:720.67px;top:401.78px;font-size:6.6px;color:#FFFFFF;font-weight:normal;transform:scaleX(0.9627);font-family:"Liberation Sans",sans-serif;">Salida</div>
<div class="a" style="left:0px;top:412px;width:800px;height:11px;background:#A0493C;"></div>
<svg class="i" style="left:4.5px;top:413.5px" width="7" height="7" viewBox="0 0 7 7"><path d="M0.5 0.5 H6.5 V5 H3 L1.5 6.5 V5 H0.5 Z" fill="none" stroke="#fff" stroke-width="0.7"/></svg>
<div class="t" style="left:14.27px;top:415.88px;font-size:6.6px;color:#FFFFFF;font-weight:normal;transform:scaleX(0.9455);font-family:"Liberation Sans",sans-serif;">Elementos guardados</div>
<svg class="i" style="left:557.5px;top:413.5px" width="6" height="8" viewBox="0 0 6 8"><path d="M3 7.5 V0.8 M0.8 3 L3 0.8 L5.2 3" fill="none" stroke="#fff" stroke-width="0.8"/></svg>
<div class="t" style="left:567.67px;top:416.08px;font-size:6.6px;color:#FFFFFF;font-weight:normal;transform:scaleX(0.9690);font-family:"Liberation Sans",sans-serif;">Agregar al control de código fuente</div>
<svg class="i" style="left:670px;top:416.5px" width="4" height="3" viewBox="0 0 4 3"><path d="M0 3 H4 L2 0.6 Z" fill="#fff"/></svg>
<svg class="i" style="left:687px;top:414.5px" width="7" height="7" viewBox="0 0 7 7"><path d="M3.5 0.2 L6.8 3.5 L3.5 6.8 L0.2 3.5 Z" fill="#fff"/><circle cx="3.5" cy="3.5" r="1" fill="#A0493C"/></svg>
<div class="t" style="left:697.67px;top:416.08px;font-size:6.6px;color:#FFFFFF;font-weight:normal;transform:scaleX(0.9640);font-family:"Liberation Sans",sans-serif;">Seleccionar repositorio</div>
<svg class="i" style="left:764.5px;top:416.5px" width="4" height="3" viewBox="0 0 4 3"><path d="M0 3 H4 L2 0.6 Z" fill="#fff"/></svg>
<svg class="i" style="left:780px;top:413.5px" width="10" height="8" viewBox="0 0 10 8"><path d="M0.5 1 H6.5 V5.5 H2.5 L0.5 7 Z" fill="none" stroke="#fff" stroke-width="0.7"/><circle cx="7.2" cy="5.6" r="2.2" fill="#fff"/></svg>
<div class="a" style="left:477.4px;top:60.4px;width:340px;height:328.9px;background:#0C0C0C;border-radius:4px;box-shadow:-1px 3px 18px rgba(0,0,0,0.32)"></div>
<div class="a" style="left:481.3px;top:65.4px;width:126.7px;height:17px;background:#252525;border-radius:5px 5px 0 0"></div>
<svg class="i" style="left:487px;top:69px" width="8" height="8" viewBox="0 0 8 8"><rect x="0.5" y="0.5" width="7" height="7" rx="1" fill="none" stroke="#E6E6E6" stroke-width="0.8"/><path d="M0.5 2.5 H7.5 M2 4 L3 5 L2 6 M3.8 6 H5.5" fill="none" stroke="#E6E6E6" stroke-width="0.6"/></svg>
<div class="t" style="left:500.07px;top:70.98px;font-size:6.6px;color:#FFFFFF;font-weight:normal;transform:scaleX(1.0001);font-family:"Liberation Sans",sans-serif;">C:\Users\ricky\Downloads\AZ</div>
<svg class="i" style="left:594px;top:70.5px" width="5" height="5" viewBox="0 0 5 5"><path d="M0 0 L5 5 M5 0 L0 5" stroke="#DDDDDD" stroke-width="0.8"/></svg>
<svg class="i" style="left:615.3px;top:70.5px" width="5.4" height="5.4" viewBox="0 0 5.4 5.4"><path d="M2.7 0 V5.4 M0 2.7 H5.4" stroke="#E6E6E6" stroke-width="0.8"/></svg>
<div class="a" style="left:626px;top:67px;width:0.7px;height:12px;background:#2A2A2A;"></div>
<svg class="i" style="left:631px;top:72px" width="5" height="3" viewBox="0 0 5 3"><path d="M0.3 0.3 L2.5 2.5 L4.7 0.3" fill="none" stroke="#CCCCCC" stroke-width="0.7"/></svg>
<div class="a" style="left:753px;top:70px;width:5px;height:0.8px;background:#E6E6E6;"></div>
<div class="a" style="left:777px;top:68px;width:5.6px;height:5.4px;background:transparent;border:0.7px solid #E0E0E0;border-radius:0.5px"></div>
<div class="term" style="top:87.2px">Por favor ¿confirme si ya se hicieron los planos? (Si o No): No
¡Solicite los planos!</div>
</body></html>
